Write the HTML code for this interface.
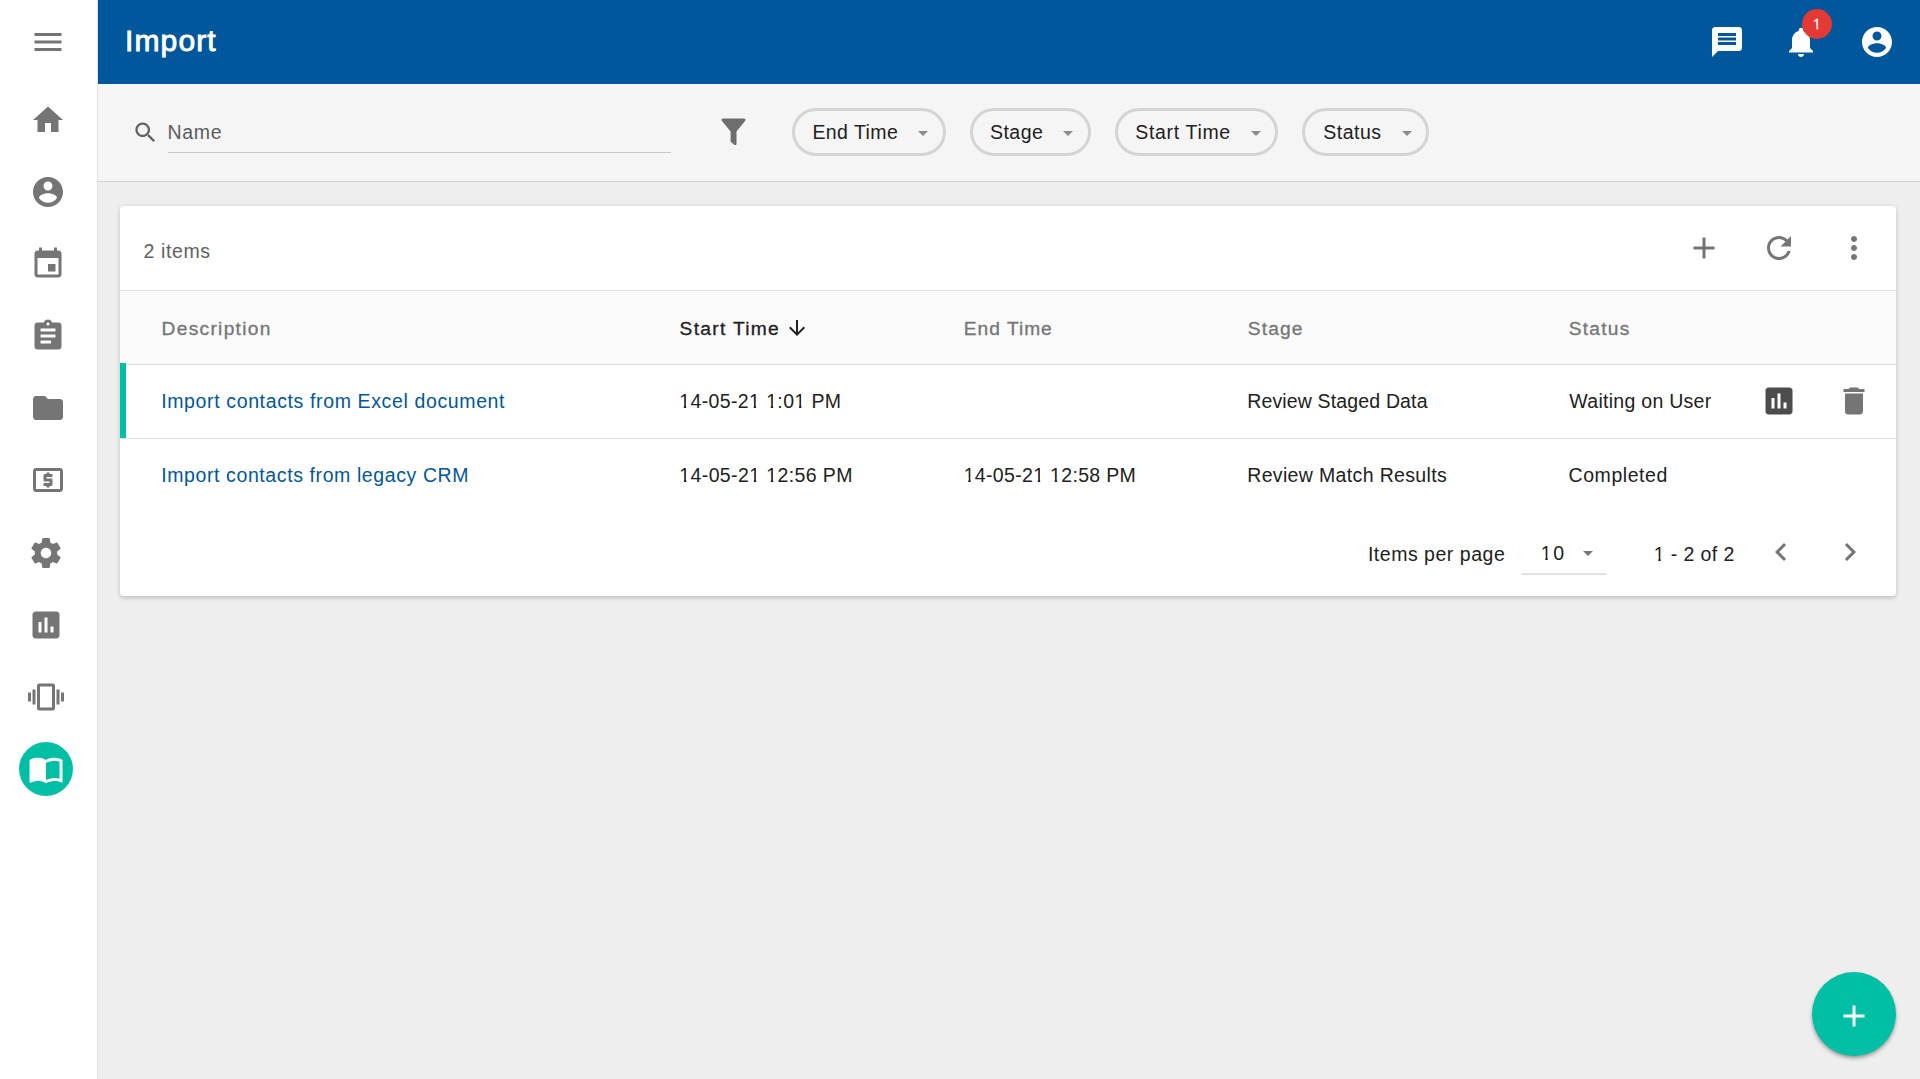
<!DOCTYPE html>
<html lang="en">
<head>
<meta charset="utf-8">
<title>Import</title>
<style>
*{box-sizing:border-box;margin:0;padding:0}
html,body{width:1920px;height:1079px;overflow:hidden}
body{position:relative;background:#eeeeee;font-family:"Liberation Sans",sans-serif;font-size:19.5px;color:#212121;-webkit-font-smoothing:antialiased}
.abs{position:absolute}
.t{position:absolute;white-space:nowrap;line-height:1;transform-origin:0 0}
svg{position:absolute;display:block}
/* sidebar */
#side{left:0;top:0;width:98px;height:1079px;background:#fff;border-right:1px solid #e0e0e0}
#side svg{fill:#757575}
/* header */
#hdr{left:98px;top:0;width:1822px;height:84px;background:#01579b}
#hdr svg{fill:#fff}
#title{left:29px;top:26.2px;font-size:30px;color:#fff;-webkit-text-stroke:0.9px #fff}
#badge{left:1704px;top:9px;width:30px;height:30px;border-radius:50%;background:#e53935}
#badge span{left:0;top:8px;width:30px;text-align:center;font-size:14.5px;color:#fff;-webkit-text-stroke:0.35px #fff}
/* filter bar */
#fbar{left:98px;top:84px;width:1822px;height:98px;background:#f5f5f5;border-bottom:1.5px solid #d2d2d2}
.chip{position:absolute;top:24px;height:48px;border:3px solid #d4d4d4;border-radius:24px}
.chip .t{top:12px;left:19px}
.chip i{position:absolute;top:19.7px;margin-left:0.45px;width:0;height:0;border-left:5.75px solid transparent;border-right:5.75px solid transparent;border-top:5.75px solid #8c8c8c}
/* card */
#card{left:120px;top:206px;width:1776px;height:390px;background:#fff;border-radius:4px;box-shadow:0 1.5px 4.5px rgba(0,0,0,.2);overflow:hidden}
#card svg{fill:#757575}
.hl{position:absolute;left:0;width:1776px;height:1.5px;background:#e0e0e0}
#thead{left:0;top:85px;width:1776px;height:73px;background:#fafafa}
.th{font-size:19.2px;color:#757575;-webkit-text-stroke:0.3px #757575}
.lnk{color:#01579b}
.o{display:inline-block;font-weight:inherit;clip-path:polygon(0 0,.36em 0,.36em 1.2em,.235em 1.2em,.235em .55em,0 .55em)}
/*LS-START*/
#title{letter-spacing:1.13px;margin-left:-2.0px;margin-top:0.0px}
#name{letter-spacing:0.74px;margin-left:-0.6px;margin-top:0.8px}
#c1{letter-spacing:0.43px;margin-left:-1.6px;margin-top:-0.2px}
#c2{letter-spacing:0.49px;margin-left:-2.1px;margin-top:-0.2px}
#c3{letter-spacing:0.68px;margin-left:-1.8px;margin-top:-0.2px}
#c4{letter-spacing:0.52px;margin-left:-0.8px;margin-top:-0.2px}
#items{letter-spacing:0.61px;margin-left:-0.5px;margin-top:0.5px}
#h1{letter-spacing:1.28px;margin-left:-0.4px;margin-top:0.0px}
#h2{letter-spacing:1.30px;margin-left:0.1px;margin-top:0.0px}
#h3{letter-spacing:0.99px;margin-left:0.3px;margin-top:0.0px}
#h4{letter-spacing:1.13px;margin-left:0.3px;margin-top:0.0px}
#h5{letter-spacing:1.25px;margin-left:0.2px;margin-top:0.0px}
#r1a{letter-spacing:0.63px;margin-left:-0.8px;margin-top:0.7px}
#r1b{letter-spacing:0.38px;margin-left:0.2px;margin-top:0.7px}
#r1d{letter-spacing:0.15px;margin-left:-0.3px;margin-top:0.7px}
#r1e{letter-spacing:0.28px;margin-left:0.3px;margin-top:0.7px}
#r2a{letter-spacing:0.60px;margin-left:-0.8px;margin-top:0.7px}
#r2b{letter-spacing:0.38px;margin-left:0.3px;margin-top:0.7px}
#r2c{letter-spacing:0.32px;margin-left:0.7px;margin-top:0.7px}
#r2d{letter-spacing:0.35px;margin-left:-0.3px;margin-top:0.7px}
#r2e{letter-spacing:0.57px;margin-left:0.0px;margin-top:0.7px}
#p1{letter-spacing:0.52px;margin-left:-0.6px;margin-top:0.9px}
#p2{letter-spacing:1.66px;margin-left:-0.3px;margin-top:1.2px}
#p3{letter-spacing:0.40px;margin-left:-0.3px;margin-top:1.2px}
/*LS-END*/
</style>
</head>
<body>

<!-- SIDEBAR -->
<div id="side" class="abs">
  <svg style="left:30px;top:24px" width="36" height="36" viewBox="0 0 24 24"><path d="M3 18h18v-2H3v2zm0-5h18v-2H3v2zm0-7v2h18V6H3z"/></svg>
  <svg style="left:30px;top:102px" width="36" height="36" viewBox="0 0 24 24"><path d="M10 20v-6h4v6h5v-8h3L12 3 2 12h3v8z"/></svg>
  <svg style="left:30px;top:174px" width="36" height="36" viewBox="0 0 24 24"><path d="M12 2C6.48 2 2 6.48 2 12s4.48 10 10 10 10-4.48 10-10S17.52 2 12 2zm0 3c1.66 0 3 1.34 3 3s-1.340 3-3 3-3-1.340-3-3 1.340-3 3-3zm0 14.200c-2.500 0-4.710-1.280-6-3.220.030-1.990 4-3.080 6-3.080 1.990 0 5.970 1.090 6 3.080-1.290 1.940-3.500 3.220-6 3.220z"/></svg>
  <svg style="left:30px;top:246px" width="36" height="36" viewBox="0 0 24 24"><path d="M17 12h-5v5h5v-5zM16 1v2H8V1H6v2H5c-1.110 0-1.990.9-1.990 2L3 19c0 1.100.890 2 2 2h14c1.100 0 2-.9 2-2V5c0-1.100-.9-2-2-2h-1V1h-2zm3 18H5V8h14v11z"/></svg>
  <svg style="left:30px;top:318px" width="36" height="36" viewBox="0 0 24 24"><path d="M19 3h-4.180C14.400 1.840 13.300 1 12 1c-1.300 0-2.400.840-2.820 2H5c-1.100 0-2 .9-2 2v14c0 1.100.9 2 2 2h14c1.100 0 2-.9 2-2V5c0-1.100-.9-2-2-2zm-7 0c.550 0 1 .450 1 1s-.450 1-1 1-1-.450-1-1 .450-1 1-1zm2 14H7v-2h7v2zm3-4H7v-2h10v2zm0-4H7V7h10v2z"/></svg>
  <svg style="left:30px;top:390px" width="36" height="36" viewBox="0 0 24 24"><path d="M10 4H4c-1.100 0-1.990.9-1.990 2L2 18c0 1.100.9 2 2 2h16c1.100 0 2-.9 2-2V8c0-1.100-.9-2-2-2h-8l-2-2z"/></svg>
  <svg style="left:30px;top:462px" width="36" height="36" viewBox="0 0 24 24"><path d="M11 17h2v-1h1c.550 0 1-.450 1-1v-3c0-.550-.450-1-1-1h-3v-1h4V8h-2V7h-2v1h-1c-.550 0-1 .450-1 1v3c0 .550.450 1 1 1h3v1H9v2h2v1zm9-13H4c-1.110 0-1.990.890-1.990 2L2 18c0 1.110.890 2 2 2h16c1.110 0 2-.890 2-2V6c0-1.110-.890-2-2-2zm0 14H4V6h16v12z"/></svg>
  <svg style="left:28px;top:535px" width="36" height="36" viewBox="0 0 24 24"><path d="M19.430 12.980c.040-.320.070-.640.070-.980s-.030-.660-.070-.980l2.110-1.650c.190-.150.240-.420.120-.640l-2-3.460c-.120-.220-.390-.3-.610-.220l-2.490 1c-.520-.4-1.080-.730-1.690-.980l-.380-2.650C14.460 2.180 14.250 2 14 2h-4c-.250 0-.460.180-.490.420l-.380 2.650c-.610.250-1.170.590-1.690.980l-2.490-1c-.230-.090-.490 0-.610.220l-2 3.460c-.130.220-.070.490.120.640l2.110 1.650c-.040.320-.070.650-.070.980s.030.660.070.980l-2.110 1.650c-.190.150-.240.420-.120.640l2 3.460c.120.220.390.3.610.220l2.490-1c.520.4 1.080.730 1.690.980l.380 2.650c.030.240.240.420.490.420h4c.250 0 .460-.180.490-.420l.380-2.650c.610-.250 1.170-.590 1.690-.980l2.490 1c.230.090.490 0 .610-.220l2-3.460c.120-.220.070-.490-.120-.640l-2.110-1.650zM12 15.500c-1.930 0-3.500-1.570-3.500-3.500s1.570-3.500 3.500-3.500 3.500 1.570 3.500 3.500-1.570 3.500-3.500 3.500z"/></svg>
  <svg style="left:28px;top:607px" width="36" height="36" viewBox="0 0 24 24"><path d="M19 3H5c-1.100 0-2 .9-2 2v14c0 1.100.9 2 2 2h14c1.100 0 2-.9 2-2V5c0-1.100-.9-2-2-2zM9 17H7v-7h2v7zm4 0h-2V7h2v10zm4 0h-2v-4h2v4z"/></svg>
  <svg style="left:28px;top:679px" width="36" height="36" viewBox="0 0 24 24"><path d="M0 15h2V9H0v6zm3 2h2V7H3v10zm19-8v6h2V9h-2zm-3 8h2V7h-2v10zM16.500 3h-9C6.670 3 6 3.670 6 4.500v15c0 .830.670 1.500 1.500 1.500h9c.830 0 1.500-.670 1.500-1.500v-15c0-.830-.670-1.500-1.500-1.500zM16 19H8V5h8v14z"/></svg>
  <div class="abs" style="left:19px;top:742px;width:54px;height:54px;border-radius:50%;background:#00bfa5"></div>
  <svg style="left:28px;top:751px;fill:#fff" width="36" height="36" viewBox="0 0 24 24"><path d="M21 5c-1.110-.350-2.330-.5-3.500-.5-1.950 0-4.050.4-5.500 1.500-1.450-1.100-3.550-1.500-5.500-1.500S2.450 4.900 1 6v14.650c0 .250.250.5.500.5.100 0 .150-.050.250-.050C3.100 20.450 5.050 20 6.500 20c1.950 0 4.050.4 5.500 1.500 1.350-.850 3.800-1.500 5.500-1.500 1.650 0 3.350.3 4.750 1.050.1.050.150.050.250.050.250 0 .5-.250.5-.5V6c-.6-.450-1.250-.750-2-1zm0 13.500c-1.100-.350-2.300-.5-3.500-.5-1.700 0-4.150.650-5.500 1.500V8c1.350-.850 3.800-1.500 5.500-1.500 1.200 0 2.400.150 3.500.5v11.500z"/></svg>
</div>

<!-- HEADER -->
<div id="hdr" class="abs">
  <span id="title" class="t">Import</span>
  <svg style="left:1610.5px;top:24px" width="36" height="36" viewBox="0 0 24 24"><path d="M20 2H4c-1.100 0-1.990.9-1.990 2L2 22l4-4h14c1.100 0 2-.9 2-2V4c0-1.100-.9-2-2-2zm-2 12H6v-2h12v2zm0-3H6V9h12v2zm0-3H6V6h12v2z"/></svg>
  <svg style="left:1685px;top:24px" width="36" height="36" viewBox="0 0 24 24"><path d="M12 22c1.100 0 2-.9 2-2h-4c0 1.100.890 2 2 2zm6-6v-5c0-3.070-1.640-5.640-4.500-6.320V4c0-.830-.670-1.500-1.500-1.500s-1.500.670-1.500 1.500v.680C7.630 5.360 6 7.920 6 11v5l-2 2v1h16v-1l-2-2z"/></svg>
  <div id="badge" class="abs"><span class="t"><b class="o">1</b></span></div>
  <svg style="left:1760.5px;top:24px" width="36" height="36" viewBox="0 0 24 24"><path d="M12 2C6.480 2 2 6.480 2 12s4.480 10 10 10 10-4.480 10-10S17.520 2 12 2zm0 3c1.660 0 3 1.340 3 3s-1.340 3-3 3-3-1.340-3-3 1.340-3 3-3zm0 14.200c-2.500 0-4.710-1.280-6-3.220.030-1.990 4-3.080 6-3.080 1.990 0 5.970 1.090 6 3.080-1.290 1.940-3.500 3.220-6 3.220z"/></svg>
</div>

<!-- FILTER BAR -->
<div id="fbar" class="abs">
  <svg style="left:34px;top:34.5px;fill:#616161" width="27" height="27" viewBox="0 0 24 24"><path d="M15.500 14h-.790l-.280-.270C15.410 12.590 16 11.110 16 9.500 16 5.910 13.090 3 9.500 3S3 5.910 3 9.500 5.910 16 9.500 16c1.610 0 3.090-.590 4.230-1.570l.270.280v.790l5 4.990L20.490 19l-4.990-5zm-6 0C7.010 14 5 11.990 5 9.500S7.010 5 9.500 5 14 7.010 14 9.500 11.990 14 9.500 14z"/></svg>
  <span id="name" class="t" style="left:70px;top:38px;color:#5c5c5c">Name</span>
  <div class="abs" style="left:70px;top:67.500px;width:503px;height:1.500px;background:#c8c8c8"></div>
  <svg style="left:617px;top:29px;fill:#6e6e6e" width="36" height="36" viewBox="0 0 36 36"><path d="M8.100 5.500H29.100c1.200 0 1.800 1.300 1.100 2.200L21.500 18.400V30.700c0 .8-.5 1.300-1.300 1.300h-.8L15.600 28.500V18.400L6.800 7.700C6.100 6.800 6.700 5.500 7.900 5.500z"/></svg>
  <div class="chip" style="left:694px;width:153.500px"><span class="t" id="c1">End Time</span><i style="left:122.500px"></i></div>
  <div class="chip" style="left:872px;width:120.500px"><span class="t" id="c2">Stage</span><i style="left:89.500px"></i></div>
  <div class="chip" style="left:1017px;width:163px"><span class="t" id="c3">Start Time</span><i style="left:132.500px"></i></div>
  <div class="chip" style="left:1204px;width:126.500px"><span class="t" id="c4">Status</span><i style="left:96.500px"></i></div>
</div>

<!-- CARD -->
<div id="card" class="abs">
  <span class="t" id="items" style="left:24px;top:35.600px;color:#616161">2 items</span>
  <svg style="left:1566px;top:24px" width="36" height="36" viewBox="0 0 24 24"><path d="M19 13h-6v6h-2v-6H5v-2h6V5h2v6h6v2z"/></svg>
  <svg style="left:1641px;top:24px" width="36" height="36" viewBox="0 0 24 24"><path d="M17.650 6.350C16.200 4.900 14.210 4 12 4c-4.420 0-7.990 3.580-7.990 8s3.570 8 7.990 8c3.730 0 6.840-2.550 7.730-6h-2.080c-.820 2.330-3.040 4-5.650 4-3.310 0-6-2.690-6-6s2.690-6 6-6c1.660 0 3.140.690 4.220 1.780L13 11h7V4l-2.350 2.350z"/></svg>
  <svg style="left:1716px;top:24px" width="36" height="36" viewBox="0 0 24 24"><path d="M12 8c1.100 0 2-.9 2-2s-.9-2-2-2-2 .9-2 2 .9 2 2 2zm0 2c-1.100 0-2 .9-2 2s.9 2 2 2 2-.9 2-2-.9-2-2-2zm0 6c-1.100 0-2 .9-2 2s.9 2 2 2 2-.9 2-2-.9-2-2-2z"/></svg>
  <div id="thead" class="abs"></div>
  <div class="hl" style="top:83.500px"></div>
  <div class="hl" style="top:157.500px"></div>
  <div class="hl" style="top:231.500px"></div>
  <div class="abs" style="left:0;top:157px;width:6px;height:75px;background:#00bfa5"></div>

  <span class="t th" id="h1" style="left:42px;top:112.500px">Description</span>
  <span class="t th" id="h2" style="left:559.500px;top:112.500px;color:#212121;-webkit-text-stroke-color:#212121">Start Time</span>
  <svg style="left:664.500px;top:110px;fill:#212121" width="24" height="24" viewBox="0 0 24 24"><path d="M20 12l-1.410-1.410L13 16.170V4h-2v12.170l-5.580-5.590L4 12l8 8 8-8z"/></svg>
  <span class="t th" id="h3" style="left:843.500px;top:112.500px">End Time</span>
  <span class="t th" id="h4" style="left:1127.500px;top:112.500px">Stage</span>
  <span class="t th" id="h5" style="left:1448.500px;top:112.500px">Status</span>

  <span class="t lnk" id="r1a" style="left:42px;top:185px">Import contacts from Excel document</span>
  <span class="t" id="r1b" style="left:559px;top:185px"><b class="o">1</b>4-05-2<b class="o">1</b> <b class="o">1</b>:0<b class="o">1</b> PM</span>
  <span class="t" id="r1d" style="left:1127.500px;top:185px">Review Staged Data</span>
  <span class="t" id="r1e" style="left:1449px;top:185px">Waiting on User</span>
  <svg style="left:1641px;top:177px;fill:#4d4d4d" width="36" height="36" viewBox="0 0 24 24"><path d="M19 3H5c-1.100 0-2 .9-2 2v14c0 1.100.9 2 2 2h14c1.100 0 2-.9 2-2V5c0-1.100-.9-2-2-2zM9 17H7v-7h2v7zm4 0h-2V7h2v10zm4 0h-2v-4h2v4z"/></svg>
  <svg style="left:1716px;top:177px" width="36" height="36" viewBox="0 0 24 24"><path d="M6 19c0 1.100.9 2 2 2h8c1.100 0 2-.9 2-2V7H6v12zM19 4h-3.500l-1-1h-5l-1 1H5v2h14V4z"/></svg>

  <span class="t lnk" id="r2a" style="left:42px;top:259.400px">Import contacts from legacy CRM</span>
  <span class="t" id="r2b" style="left:559px;top:259.400px"><b class="o">1</b>4-05-2<b class="o">1</b> <b class="o">1</b>2:56 PM</span>
  <span class="t" id="r2c" style="left:843px;top:259.400px"><b class="o">1</b>4-05-2<b class="o">1</b> <b class="o">1</b>2:58 PM</span>
  <span class="t" id="r2d" style="left:1127.500px;top:259.400px">Review Match Results</span>
  <span class="t" id="r2e" style="left:1448.500px;top:259.400px">Completed</span>

  <span class="t" id="p1" style="left:1248.500px;top:338.300px">Items per page</span>
  <span class="t" id="p2" style="left:1421px;top:337.200px"><b class="o">1</b>0</span>
  <i class="abs" style="left:1463.300px;top:345px;width:0;height:0;border-left:5.5px solid transparent;border-right:5.5px solid transparent;border-top:5.75px solid #757575"></i>
  <div class="abs" style="left:1402px;top:367px;width:84px;height:1.500px;background:#e2e2e2"></div>
  <span class="t" id="p3" style="left:1534px;top:338.300px"><b class="o">1</b> - 2 of 2</span>
  <svg style="left:1642.500px;top:328.300px" width="36" height="36" viewBox="0 0 24 24"><path d="M15.410 7.410L14 6l-6 6 6 6 1.410-1.410L10.830 12z"/></svg>
  <svg style="left:1711.600px;top:328.300px" width="36" height="36" viewBox="0 0 24 24"><path d="M10 6L8.590 7.410 13.170 12l-4.580 4.590L10 18l6-6z"/></svg>
</div>

<!-- FAB -->
<div id="fab" class="abs" style="left:1812px;top:972px;width:84px;height:84px;border-radius:50%;background:#00bfa5;box-shadow:0 2.5px 4px -0.5px rgba(0,0,0,.42)">
  <svg style="left:24px;top:26px;fill:#fff" width="36" height="36" viewBox="0 0 24 24"><path d="M19 13h-6v6h-2v-6H5v-2h6V5h2v6h6v2z"/></svg>
</div>

</body>
</html>
